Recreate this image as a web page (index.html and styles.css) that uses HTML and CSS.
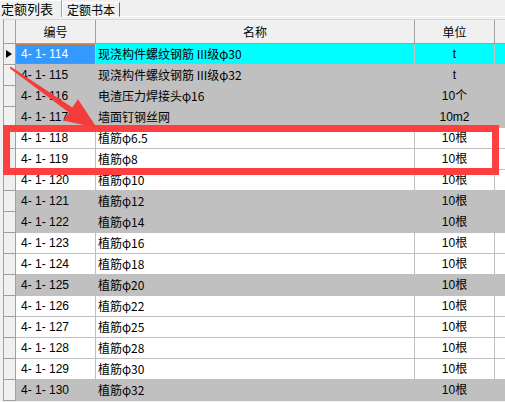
FILE: index.html
```html
<!DOCTYPE html>
<html>
<head>
<meta charset="utf-8">
<link rel="stylesheet" href="styles.css">
</head>
<body>
<div class="page">
  <div class="tabs">
    <div class="tab active">定额列表</div>
    <div class="tab">定额书本</div>
    <div class="tabfill"></div>
  </div>
  <div class="grid">
    <div class="row head">
      <div class="ind"></div>
      <div class="c code">编号</div>
      <div class="c name">名称</div>
      <div class="c unit">单位</div>
      <div class="c fill"></div>
    </div>
    <div class="row sel">
      <div class="ind"><span class="arrowhead"></span></div>
      <div class="c code"><span class="focus">4- 1- 114</span></div>
      <div class="c name">现浇构件螺纹钢筋 III级φ30</div>
      <div class="c unit">t</div>
      <div class="c fill"></div>
    </div>
    <div class="row g">
      <div class="ind"></div>
      <div class="c code">4- 1- 115</div>
      <div class="c name">现浇构件螺纹钢筋 III级φ32</div>
      <div class="c unit">t</div>
      <div class="c fill"></div>
    </div>
    <div class="row g">
      <div class="ind"></div>
      <div class="c code">4- 1- 116</div>
      <div class="c name">电渣压力焊接头φ16</div>
      <div class="c unit">10个</div>
      <div class="c fill"></div>
    </div>
    <div class="row g">
      <div class="ind"></div>
      <div class="c code">4- 1- 117</div>
      <div class="c name">墙面钉钢丝网</div>
      <div class="c unit">10m2</div>
      <div class="c fill"></div>
    </div>
    <div class="row w">
      <div class="ind"></div>
      <div class="c code">4- 1- 118</div>
      <div class="c name">植筋φ6.5</div>
      <div class="c unit">10根</div>
      <div class="c fill"></div>
    </div>
    <div class="row w">
      <div class="ind"></div>
      <div class="c code">4- 1- 119</div>
      <div class="c name">植筋φ8</div>
      <div class="c unit">10根</div>
      <div class="c fill"></div>
    </div>
    <div class="row w">
      <div class="ind"></div>
      <div class="c code">4- 1- 120</div>
      <div class="c name">植筋φ10</div>
      <div class="c unit">10根</div>
      <div class="c fill"></div>
    </div>
    <div class="row g">
      <div class="ind"></div>
      <div class="c code">4- 1- 121</div>
      <div class="c name">植筋φ12</div>
      <div class="c unit">10根</div>
      <div class="c fill"></div>
    </div>
    <div class="row g">
      <div class="ind"></div>
      <div class="c code">4- 1- 122</div>
      <div class="c name">植筋φ14</div>
      <div class="c unit">10根</div>
      <div class="c fill"></div>
    </div>
    <div class="row w">
      <div class="ind"></div>
      <div class="c code">4- 1- 123</div>
      <div class="c name">植筋φ16</div>
      <div class="c unit">10根</div>
      <div class="c fill"></div>
    </div>
    <div class="row w">
      <div class="ind"></div>
      <div class="c code">4- 1- 124</div>
      <div class="c name">植筋φ18</div>
      <div class="c unit">10根</div>
      <div class="c fill"></div>
    </div>
    <div class="row g">
      <div class="ind"></div>
      <div class="c code">4- 1- 125</div>
      <div class="c name">植筋φ20</div>
      <div class="c unit">10根</div>
      <div class="c fill"></div>
    </div>
    <div class="row w">
      <div class="ind"></div>
      <div class="c code">4- 1- 126</div>
      <div class="c name">植筋φ22</div>
      <div class="c unit">10根</div>
      <div class="c fill"></div>
    </div>
    <div class="row w">
      <div class="ind"></div>
      <div class="c code">4- 1- 127</div>
      <div class="c name">植筋φ25</div>
      <div class="c unit">10根</div>
      <div class="c fill"></div>
    </div>
    <div class="row w">
      <div class="ind"></div>
      <div class="c code">4- 1- 128</div>
      <div class="c name">植筋φ28</div>
      <div class="c unit">10根</div>
      <div class="c fill"></div>
    </div>
    <div class="row w">
      <div class="ind"></div>
      <div class="c code">4- 1- 129</div>
      <div class="c name">植筋φ30</div>
      <div class="c unit">10根</div>
      <div class="c fill"></div>
    </div>
    <div class="row g">
      <div class="ind"></div>
      <div class="c code">4- 1- 130</div>
      <div class="c name">植筋φ32</div>
      <div class="c unit">10根</div>
      <div class="c fill"></div>
    </div>
  </div>
  <div class="highlight"></div>
  <svg class="pointer" width="505" height="402" viewBox="0 0 505 402">
    <polygon points="10.5,66.5 72.3,107.4 78,99.2 97,128 63.2,120.6 68.9,112.4 10,68.5" fill="#f43c3c"/>
  </svg>
</div>
</body>
</html>
```
FILE: styles.css
```css
* { box-sizing: border-box; }
html, body {
  margin: 0;
  padding: 0;
  background: #f0f0f0;
}
.page {
  position: relative;
  width: 505px;
  height: 402px;
  overflow: hidden;
  font-family: "Liberation Sans", "Noto Sans CJK SC", sans-serif;
  font-size: 12px;
  color: #000;
}
.tabs {
  display: flex;
  align-items: flex-end;
  height: 17px;
}
.tab {
  height: 15px;
  line-height: 13px;
  padding: 0 3px 0 4px;
  border-top: 1px solid #ffffff;
  border-left: 1px solid #ffffff;
  border-right: 1px solid #696969;
  border-bottom: 1px solid #ffffff;
  font-family: "Noto Sans CJK SC", sans-serif;
  font-size: 12px;
  width: 58px;
}
.tab.active {
  height: 17px;
  width: 62px;
  padding: 0 0 0 1px;
  line-height: 15px;
  font-size: 13px;
  border-bottom: none;
  border-left: none;
  border-right: 1px solid #a0a0a0;
}
.tabfill {
  flex: 1;
  height: 1px;
  background: #ffffff;
}
.grid {
  margin-top: 2px;
  margin-left: 3px;
  border-left: 1px solid #a0a0a0;
  border-top: 1px solid #d8d8d8;
}
.row {
  display: flex;
  height: 21px;
}
.row.head {
  height: 24px;
}
.ind {
  width: 12px;
  flex: none;
  background: #f0f0f0;
  border-right: 1px solid #a0a0a0;
  border-bottom: 1px solid #a0a0a0;
  display: flex;
  align-items: center;
  padding-left: 2px;
}
.arrowhead {
  width: 0;
  height: 0;
  border-left: 6px solid #000;
  border-top: 4.5px solid transparent;
  border-bottom: 4.5px solid transparent;
}
.c {
  flex: none;
  border-right: 1px solid #c0c0c0;
  border-bottom: 1px solid #c0c0c0;
  line-height: 20px;
  white-space: nowrap;
  overflow: hidden;
}
.code { width: 80px; padding-left: 5px; }
.name { width: 319px; padding-left: 2px; font-family: "Noto Sans CJK SC", sans-serif; }
.unit { width: 80px; text-align: center; font-family: "Liberation Sans", "Noto Sans CJK SC", sans-serif; }
.fill { flex: 1; border-right: none; }
.head .c {
  background: #f0f0f0;
  border-right-color: #a0a0a0;
  border-bottom-color: #a0a0a0;
  line-height: 23px;
  text-align: center;
  padding-left: 0;
  font-family: "Noto Sans CJK SC", sans-serif;
  font-size: 12px;
}
.row.w .c { background: #ffffff; }
.row.g .c { background: #c0c0c0; }
.row.sel .c { background: #00ffff; }
.row.sel .code {
  background: #3399ff;
  color: #ffffff;
  padding: 0;
}
.focus {
  display: block;
  height: 20px;
  line-height: 18px;
  padding-left: 4px;
  border: 1px dotted #d08040;
}
.highlight {
  position: absolute;
  left: 3px;
  top: 125px;
  width: 496px;
  height: 50px;
  border: 7px solid #fd3f3f;
}
.pointer {
  position: absolute;
  left: 0;
  top: 0;
}
```
